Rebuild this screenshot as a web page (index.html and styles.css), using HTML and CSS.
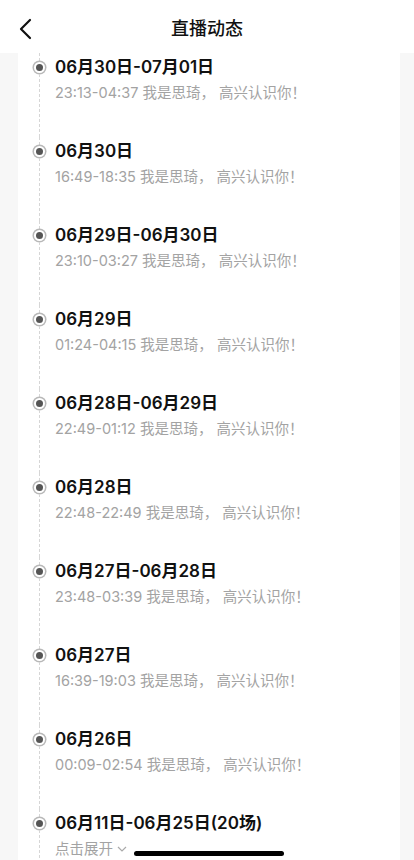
FILE: index.html
```html
<!DOCTYPE html>
<html lang="zh">
<head>
<meta charset="utf-8">
<title>直播动态</title>
<link rel="stylesheet" href="styles.css">
</head>
<body>
<header class="nav">
  <span class="back"><svg width="14" height="22" viewBox="0 0 14 22"><path d="M12 2 L3 11 L12 20" fill="none" stroke="#111" stroke-width="2.2" stroke-linecap="round" stroke-linejoin="round"/></svg></span>
  <h1 class="nav-title">直播动态</h1>
</header>
<main class="card">
  <div class="item"><div class="rail"><i class="seg top"></i><i class="dot"></i><i class="seg"></i></div><div class="txt"><div class="t">06月30日-07月01日</div><div class="s">23:13-04:37 我是思琦， 高兴认识你！</div></div></div>
  <div class="item"><div class="rail"><i class="seg top"></i><i class="dot"></i><i class="seg"></i></div><div class="txt"><div class="t">06月30日</div><div class="s">16:49-18:35 我是思琦， 高兴认识你！</div></div></div>
  <div class="item"><div class="rail"><i class="seg top"></i><i class="dot"></i><i class="seg"></i></div><div class="txt"><div class="t">06月29日-06月30日</div><div class="s">23:10-03:27 我是思琦， 高兴认识你！</div></div></div>
  <div class="item"><div class="rail"><i class="seg top"></i><i class="dot"></i><i class="seg"></i></div><div class="txt"><div class="t">06月29日</div><div class="s">01:24-04:15 我是思琦， 高兴认识你！</div></div></div>
  <div class="item"><div class="rail"><i class="seg top"></i><i class="dot"></i><i class="seg"></i></div><div class="txt"><div class="t">06月28日-06月29日</div><div class="s">22:49-01:12 我是思琦， 高兴认识你！</div></div></div>
  <div class="item"><div class="rail"><i class="seg top"></i><i class="dot"></i><i class="seg"></i></div><div class="txt"><div class="t">06月28日</div><div class="s">22:48-22:49 我是思琦， 高兴认识你！</div></div></div>
  <div class="item"><div class="rail"><i class="seg top"></i><i class="dot"></i><i class="seg"></i></div><div class="txt"><div class="t">06月27日-06月28日</div><div class="s">23:48-03:39 我是思琦， 高兴认识你！</div></div></div>
  <div class="item"><div class="rail"><i class="seg top"></i><i class="dot"></i><i class="seg"></i></div><div class="txt"><div class="t">06月27日</div><div class="s">16:39-19:03 我是思琦， 高兴认识你！</div></div></div>
  <div class="item"><div class="rail"><i class="seg top"></i><i class="dot"></i><i class="seg"></i></div><div class="txt"><div class="t">06月26日</div><div class="s">00:09-02:54 我是思琦， 高兴认识你！</div></div></div>
  <div class="item"><div class="rail"><i class="seg top"></i><i class="dot"></i><i class="seg"></i></div><div class="txt"><div class="t">06月11日-06月25日(20场)</div><div class="s more">点击展开 <svg width="10" height="6" viewBox="0 0 10 6"><path d="M1 1 L5 5 L9 1" fill="none" stroke="#aaa" stroke-width="1.2"/></svg></div></div></div>
</main>
<div class="home-bar"></div>
</body>
</html>
```
FILE: styles.css
```css
* { box-sizing: border-box; }
html, body { margin: 0; padding: 0; }
body {
  background: #f7f7f7;
  font-family: Inter, "Noto Sans CJK SC", sans-serif;
  color: #111;
  height: 860px;
  overflow: hidden;
}
.nav {
  height: 53px;
  background: #fff;
  display: flex;
  align-items: center;
  justify-content: center;
  position: relative;
}
.back {
  position: absolute;
  left: 18px;
  top: 18px;
  display: flex;
}
.nav-title {
  margin: 0;
  font-size: 18px;
  font-weight: 500;
  line-height: 24px;
  margin-top: 4px;
}
.card {
  margin: 0 14px 0 18px;
  background: #fff;
  padding-left: 14px;
  height: 820px;
}
.item {
  display: flex;
  height: 84px;
}
.rail {
  width: 14px;
  display: flex;
  flex-direction: column;
  align-items: center;
}
.seg {
  display: block;
  width: 0;
  flex: 1;
  border-left: 1px dashed #d6d6d6;
}
.seg.top { flex: 0 0 8px; }
.dot {
  display: block;
  flex: 0 0 auto;
  width: 7px;
  height: 7px;
  border-radius: 50%;
  background: #555;
  box-shadow: 0 0 0 2px #fff, 0 0 0 3.5px #b8b8b8;
  margin: 3px 0;
}
.txt {
  padding-left: 9px;
  padding-top: 2px;
}
.t {
  font-size: 17px;
  font-weight: 600;
  line-height: 24px;
  color: #111;
}
.s {
  font-size: 14.5px;
  line-height: 20px;
  margin-top: 4px;
  color: #a3a3a3;
}
.more { display: flex; align-items: center; gap: 4px; }
.home-bar {
  position: fixed;
  left: 134px;
  bottom: 4px;
  width: 150px;
  height: 5px;
  border-radius: 3px;
  background: #000;
}
```
